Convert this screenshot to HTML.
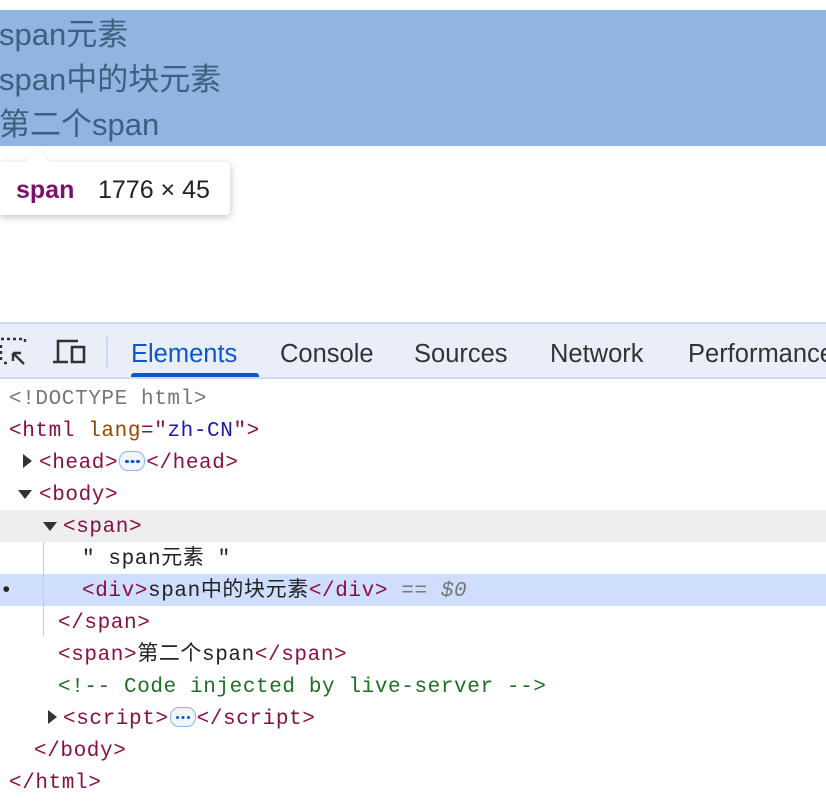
<!DOCTYPE html>
<html><head><meta charset="utf-8"><style>
body{margin:0;width:826px;height:806px;background:#fff;position:relative;overflow:hidden;font-family:"Liberation Sans","Noto Sans CJK SC",sans-serif}
.hl{position:absolute;left:0;top:10px;width:826px;height:136px;background:#8fb5e0}
.hl div{font-size:31px;color:#3f5f80;height:45px;line-height:45px;position:relative;top:2px;left:-1px}
.tip{position:absolute;left:0;top:162px;width:230px;height:53px;background:#fff;border-radius:0 4px 4px 0;box-shadow:0 2px 8px rgba(0,0,0,.25)}
.arrow{position:absolute;left:25px;top:148px;width:0;height:0;border-left:12px solid transparent;border-right:12px solid transparent;border-bottom:14px solid #fff;filter:drop-shadow(0 -1px 1px rgba(0,0,0,.08))}
.tip b{position:absolute;left:16px;top:14px;font-size:25px;color:#7a106f}
.tip span{position:absolute;left:98px;top:14px;font-size:25px;color:#202124}
.bar{position:absolute;left:0;top:322px;width:826px;height:53px;background:#e9eef9;border-top:2px solid #cdd9f5;border-bottom:2px solid #cdd9f5}
.tab{position:absolute;top:16px;font-size:25.5px;color:#333;white-space:nowrap}
.ul{position:absolute;left:131px;top:49px;width:128px;height:4px;background:#0b57d0;border-radius:3px 3px 0 0}
.row{position:absolute;left:0;width:826px;height:32px;line-height:35px;font-family:"Liberation Mono","Noto Sans CJK SC",monospace;font-size:21px;letter-spacing:0.6px;white-space:pre;color:#222}
.t{color:#881144}.a{color:#994500}.v{color:#1a1aa6}.c{color:#236e25}.g{color:#777}
.tri{position:absolute;top:12px;width:0;height:0}
.down{border-left:7px solid transparent;border-right:7px solid transparent;border-top:9px solid #333}
.right{top:8px;border-top:7px solid transparent;border-bottom:7px solid transparent;border-left:9px solid #333}
.dots{display:inline-block;position:relative;width:24px;height:18px;border:1.5px solid #8ab4f8;border-radius:9px;vertical-align:-3px;margin:0 1px;background:#f1f5fd}
.dots:before{content:"";position:absolute;left:5px;top:7.5px;width:3.5px;height:3.5px;border-radius:50%;background:#0b57d0;box-shadow:5.5px 0 #0b57d0,11px 0 #0b57d0}
.vl{position:absolute;left:43px;top:542px;width:1px;height:94px;background:#ccc}
</style></head><body>
<div class="hl"><div>span元素</div><div>span中的块元素</div><div>第二个span</div></div>
<div class="tip"><b>span</b><span>1776 × 45</span></div>
<div class="arrow"></div>
<div class="bar">
<svg style="position:absolute;left:0;top:13px" width="30" height="30" viewBox="0 0 30 30" fill="none" stroke="#333" stroke-width="2.4"><path d="M1 2h3M7 2h3M13 2h3M19 2h3M25 2v3M1 8v3M1 14v3M1 20v3M4 26h3M13 16l11 11M13 16h8M13 16v8"/></svg>
<svg style="position:absolute;left:52px;top:14px" width="36" height="28" viewBox="0 0 36 28" fill="none" stroke="#333" stroke-width="2.6"><path d="M6 23V3h20M1 24h15M20 9h12v15H20z"/></svg>
<div style="position:absolute;left:106px;top:13px;width:2px;height:30px;background:#cdd9f5"></div>
<div class="tab" style="left:131px;color:#0b57d0">Elements</div>
<div class="tab" style="left:280px">Console</div>
<div class="tab" style="left:414px">Sources</div>
<div class="tab" style="left:550px">Network</div>
<div class="tab" style="left:688px">Performance</div>
<div class="ul"></div>
</div>
<div class="row" style="top:382px;padding-left:9px"><span class="g">&lt;!DOCTYPE html&gt;</span></div>
<div class="row" style="top:414px;padding-left:9px"><span class="t">&lt;html </span><span class="a">lang</span><span class="t">="</span><span class="v">zh-CN</span><span class="t">"&gt;</span></div>
<div class="row" style="top:446px;padding-left:39px"><i class="tri right" style="left:23px"></i><span class="t">&lt;head&gt;</span><span class="dots"></span><span class="t">&lt;/head&gt;</span></div>
<div class="row" style="top:478px;padding-left:39px"><i class="tri down" style="left:18px"></i><span class="t">&lt;body&gt;</span></div>
<div class="row" style="top:510px;padding-left:63px;background:#eeeeee"><i class="tri down" style="left:43px"></i><span class="t">&lt;span&gt;</span></div>
<div class="row" style="top:542px;padding-left:82px">" span元素 "</div>
<div class="row" style="top:574px;padding-left:82px;background:#cfdefc"><span style="position:absolute;left:0;top:0">•</span><span class="t">&lt;div&gt;</span>span中的块元素<span class="t">&lt;/div&gt;</span><span class="g"> == <i>$0</i></span></div>
<div class="row" style="top:606px;padding-left:58px"><span class="t">&lt;/span&gt;</span></div>
<div class="vl"></div>
<div class="row" style="top:638px;padding-left:58px"><span class="t">&lt;span&gt;</span>第二个span<span class="t">&lt;/span&gt;</span></div>
<div class="row" style="top:670px;padding-left:58px"><span class="c">&lt;!-- Code injected by live-server --&gt;</span></div>
<div class="row" style="top:702px;padding-left:63px"><i class="tri right" style="left:48px"></i><span class="t">&lt;script&gt;</span><span class="dots"></span><span class="t">&lt;/script&gt;</span></div>
<div class="row" style="top:734px;padding-left:34px"><span class="t">&lt;/body&gt;</span></div>
<div class="row" style="top:766px;padding-left:9px"><span class="t">&lt;/html&gt;</span></div>
</body></html>
